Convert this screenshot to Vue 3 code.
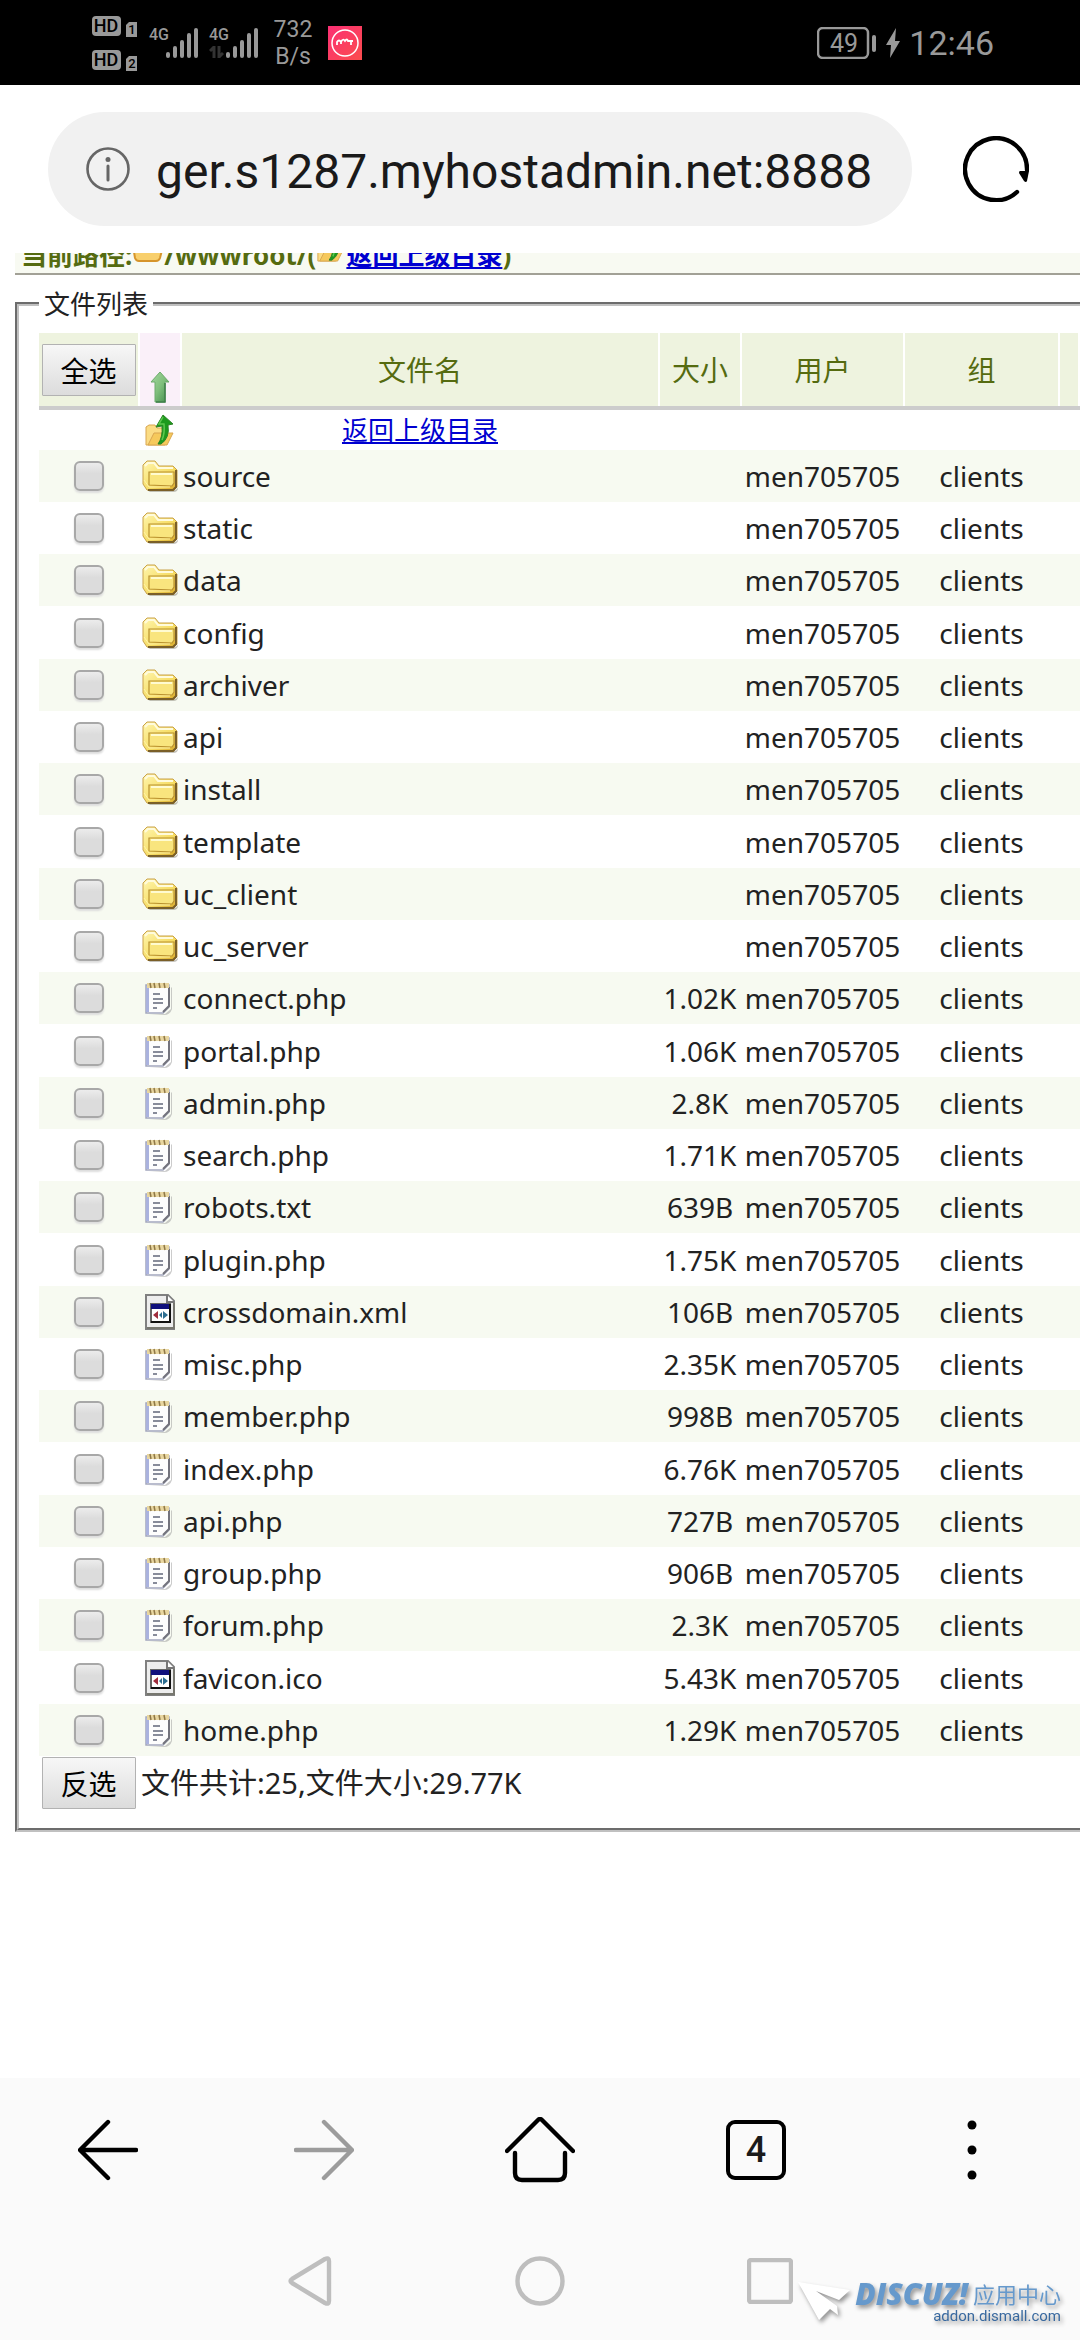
<script setup>
import {ref, computed} from 'vue';

const url = ref('ger.s1287.myhostadmin.net:8888');

const folders = ['source', 'static', 'data', 'config', 'archiver', 'api', 'install', 'template', 'uc_client', 'uc_server'];

const files = [
  ['connect.php', '1.02K'],
  ['portal.php', '1.06K'],
  ['admin.php', '2.8K'],
  ['search.php', '1.71K'],
  ['robots.txt', '639B'],
  ['plugin.php', '1.75K'],
  ['crossdomain.xml', '106B'],
  ['misc.php', '2.35K'],
  ['member.php', '998B'],
  ['index.php', '6.76K'],
  ['api.php', '727B'],
  ['group.php', '906B'],
  ['forum.php', '2.3K'],
  ['favicon.ico', '5.43K'],
  ['home.php', '1.29K']
];

const iconFor = (name) => {
  return /\.(xml|ico)$/.test(name) ? 'icon-app' : 'icon-note';
};

const rows = ref([
  ...folders.map((name) => ({name, size: '', icon: 'icon-folder', checked: false})),
  ...files.map(([name, size]) => ({name, size, icon: iconFor(name), checked: false}))
]);

const summary = computed(() => `文件共计:${rows.value.length},文件大小:29.77K`);

const selectAll = () => {
  rows.value.forEach((row) => { row.checked = true; });
};

const invert = () => {
  rows.value.forEach((row) => { row.checked = !row.checked; });
};
</script>

<template>
  <div class="phone">
    <!-- shared icons -->
    <svg class="defs" width="0" height="0" aria-hidden="true">
      <defs>
        <linearGradient id="gold" x1="0" y1="0" x2="1" y2="1">
          <stop offset="0" stop-color="#fff6b0" />
          <stop offset="0.6" stop-color="#f6dc62" />
          <stop offset="1" stop-color="#d9a928" />
        </linearGradient>
        <linearGradient id="green" x1="0" y1="0" x2="1" y2="1">
          <stop offset="0" stop-color="#a5d8a0" />
          <stop offset="0.5" stop-color="#7fbf7c" />
          <stop offset="1" stop-color="#3f8a4a" />
        </linearGradient>
        <linearGradient id="pink" x1="0" y1="0" x2="1" y2="1">
          <stop offset="0" stop-color="#fb2f74" />
          <stop offset="1" stop-color="#fb4d4d" />
        </linearGradient>
      </defs>
      <symbol id="icon-folder" viewBox="0 0 36 36">
        <path d="M5 32h27q4 0 4-4V13v17q0 4-5 4H8z" fill="#8a8577" opacity="0.5" />
        <path d="M1 26V7l4-4h8l4 5h14l4 4v17l-3 3H5z" fill="url(#gold)" stroke="#c9a24a" />
        <path d="M34 12v17l-3 3H6" fill="none" stroke="#7a5f28" stroke-width="2" />
        <path d="M3 8l3-3h6l4 5h15" fill="none" stroke="#fffbdc" stroke-width="2" />
        <path d="M7 27V14h25v11l-2 3z" fill="#f9e57e" stroke="#b8902f" stroke-width="1.2" />
        <path d="M9 16h21" stroke="#fffbd0" stroke-width="2" />
        <path d="M2 22l5 7h21" fill="none" stroke="#fff3a8" />
      </symbol>
      <symbol id="icon-bowl" viewBox="0 0 32 24">
        <path d="M1 8q0-6 6-6h18q6 0 6 6l-3 12q-1 3-4 3H7q-3 0-4-3z" fill="#f8cf6c" stroke="#d6952b" stroke-width="2" />
        <path d="M4 9h24l-2 5H6z" fill="#ffeeb0" />
      </symbol>
      <symbol id="icon-open" viewBox="0 0 30 32">
        <path d="M1 31V13l3-2h6l2 3h8v17z" fill="#fbdc84" stroke="#d9a650" />
        <path d="M3 31l6-12h19l-6 12z" fill="#f6c95c" stroke="#d9a650" />
        <path d="M13 30q5-7 4-18l-6 1 7-12 10 9-5 1q2 13-7 19z" fill="#1d9a1d" stroke="#2c8427" />
        <path d="M18 3l-4 7h5q1 9-2 16" fill="none" stroke="#5fc850" stroke-width="1.5" />
      </symbol>
      <symbol id="icon-note" viewBox="0 0 36 36">
        <path d="M7 35l16-1 6-5V7l1 1v21q-2 6-8 6z" fill="#999" opacity="0.5" />
        <path d="M4 5h23v22l-6 6H4z" fill="#fdfdfd" stroke="#a3a7bd" stroke-width="1.5" />
        <path d="M4 6h3v26H4z" fill="#aab2de" />
        <path d="M27 7v19l-6 6" fill="none" stroke="#73737c" stroke-width="2" />
        <path d="M5 3h22v5H5z" fill="#e8d6a0" />
        <path d="M8 3l1 5M12 3l1 5M17 3l1 5M22 3l1 5" stroke="#8f7847" stroke-width="1.5" />
        <path d="M11 14h7M11 19h10M11 23h10M11 28h4" stroke="#626779" stroke-width="1.6" />
      </symbol>
      <symbol id="icon-app" viewBox="0 0 36 36">
        <path d="M4 1h22l6 6v28H4z" fill="#ededed" stroke="#808080" stroke-width="2" />
        <path d="M25 1v7h7" fill="#fff" stroke="#777" stroke-width="2" />
        <path d="M32 9v25H5" fill="none" stroke="#77776f" stroke-width="2" />
        <path d="M9 10h19v18H9z" fill="#fff" stroke="#666" stroke-width="2" />
        <path d="M9 10h19v5H9z" fill="#10107c" />
        <path d="M28 10v18H9" fill="none" stroke="#111" stroke-width="2" />
        <path d="M16 17v8l-5-4z" fill="#a02c3c" />
        <path d="M17 21l3-3v6zM21 17l5 4-5 4z" fill="#2d6d90" />
      </symbol>
      <symbol id="icon-signal" viewBox="0 0 32 30">
        <path d="M2 26v2M9 20v8M16 14v14M23 7v21M30 2v26" stroke="#999" stroke-width="4" stroke-linecap="round" />
      </symbol>
    </svg>

    <header class="status">
      <svg width="46" height="58" viewBox="0 0 46 58" role="img" aria-label="HD">
        <rect x="0" y="2" width="29" height="20" rx="4" fill="#999" />
        <rect x="0" y="36" width="29" height="20" rx="4" fill="#999" />
        <path d="M34 11l3-3h8v15H34z" fill="#999" />
        <path d="M34 45l3-3h8v15H34z" fill="#999" />
        <g fill="#000" font-family="Roboto, sans-serif" font-weight="500" text-anchor="middle">
          <text x="14" y="18" font-size="18">HD</text>
          <text x="14" y="52" font-size="18">HD</text>
          <text x="40" y="20" font-size="13">1</text>
          <text x="40" y="54" font-size="13">2</text>
        </g>
      </svg>
      <div class="cell">
        <div class="gen"><span>4G</span></div>
        <svg width="32" height="30"><use href="#icon-signal" /></svg>
      </div>
      <div class="cell">
        <div class="gen">
          <span>4G</span>
          <svg width="15" height="12" viewBox="0 0 15 12">
            <path d="M1 5l4-4v11M10 0v11l4-4" fill="none" stroke="#333" stroke-width="3" />
          </svg>
        </div>
        <svg width="32" height="30"><use href="#icon-signal" /></svg>
      </div>
      <div class="speed"><span>732</span><span>B/s</span></div>
      <svg width="34" height="34" viewBox="0 0 34 34">
        <rect width="34" height="34" fill="url(#pink)" />
        <circle cx="17" cy="17" r="13" fill="none" stroke="#fff" stroke-width="1.5" />
        <path d="M9 19v-3q2-3 4 0 2-4 4-1 2-3 3 0h5M23 15v4M13 16v2" fill="none" stroke="#fff" stroke-width="1.8" />
      </svg>
      <div class="right">
        <svg width="60" height="32" viewBox="0 0 60 32" role="img" aria-label="49%">
          <rect x="1" y="1" width="50" height="30" rx="5" fill="none" stroke="#999" stroke-width="2.5" />
          <rect x="55" y="8" width="4" height="17" rx="2" fill="#999" />
          <text x="27" y="25" fill="#999" font-family="Roboto, sans-serif" font-size="25" text-anchor="middle">49</text>
        </svg>
        <svg width="14" height="30" viewBox="0 0 14 30">
          <path d="M10 0L0 17h5L4 30l10-17H9z" fill="#999" />
        </svg>
        <time>12:46</time>
      </div>
    </header>

    <div class="address">
      <label class="url">
        <svg width="44" height="44" viewBox="0 0 44 44" fill="none" stroke="#666" role="img" aria-label="网站信息">
          <circle cx="22" cy="22" r="20.5" stroke-width="2.6" />
          <path d="M22 19v14" stroke-width="3" stroke-linecap="round" />
          <circle cx="22" cy="12.5" r="2.5" fill="#666" stroke="none" />
        </svg>
        <input v-model="url" type="text" aria-label="网址">
      </label>
      <button class="plain" type="button" aria-label="刷新">
        <svg width="66" height="66" viewBox="0 0 66 66">
          <path d="M54 56A31 31 0 1 1 64 34" fill="none" stroke="#000" stroke-width="4.4" stroke-linecap="round" />
          <path d="M57 35h9l-2 10q-1 2-3 0l-5-8q0-2 1-2z" fill="#000" />
        </svg>
      </button>
    </div>

    <main class="page">
      <div class="path">
        <p>
          <span>当前路径:</span>
          <svg width="32" height="24"><use href="#icon-bowl" /></svg>
          <span>/wwwroot/(</span>
          <svg width="30" height="30"><use href="#icon-open" /></svg>
          <a href="#">返回上级目录</a>
          <span>)</span>
        </p>
      </div>

      <fieldset>
        <legend>文件列表</legend>
        <table>
          <colgroup>
            <col class="c-check">
            <col class="c-icon">
            <col>
            <col class="c-size">
            <col class="c-user">
            <col class="c-group">
            <col class="c-more">
          </colgroup>
          <thead>
            <tr>
              <th><button class="btn" type="button" @click="selectAll">全选</button></th>
              <th class="sorted">
                <svg width="20" height="32" viewBox="0 0 20 32">
                  <path d="M10 1l9 10h-4v20H5V11H1z" fill="url(#green)" stroke="#6cab6c" />
                  <path d="M15 12v19H6" fill="none" stroke="#3c7d48" stroke-width="1.5" />
                </svg>
              </th>
              <th>文件名</th>
              <th>大小</th>
              <th>用户</th>
              <th>组</th>
              <th></th>
            </tr>
          </thead>
          <tbody>
            <tr class="up">
              <td></td>
              <td><svg width="30" height="32"><use href="#icon-open" /></svg></td>
              <td><a href="#">返回上级目录</a></td>
              <td colspan="4"></td>
            </tr>
          </tbody>
          <tbody class="list">
            <tr v-for="row in rows" :key="row.name">
              <td><input v-model="row.checked" type="checkbox" :aria-label="row.name"></td>
              <td><svg width="36" height="36"><use :href="'#' + row.icon" /></svg></td>
              <td class="name">{{ row.name }}</td>
              <td>{{ row.size }}</td>
              <td>men705705</td>
              <td>clients</td>
              <td></td>
            </tr>
          </tbody>
          <tfoot>
            <tr>
              <td><button class="btn" type="button" @click="invert">反选</button></td>
              <td class="total" colspan="6">{{ summary }}</td>
            </tr>
          </tfoot>
        </table>
      </fieldset>
    </main>

    <footer class="bottom">
      <nav class="tools">
        <button class="plain" type="button" aria-label="后退">
          <svg width="60" height="64" viewBox="0 0 60 64" fill="none" stroke="#000" stroke-width="4.4" stroke-linecap="round" stroke-linejoin="round">
            <path d="M30 4L2 32l28 28M3 32h55" />
          </svg>
        </button>
        <button class="plain" type="button" aria-label="前进">
          <svg width="60" height="64" viewBox="0 0 60 64" fill="none" stroke="#9c9c9c" stroke-width="4.4" stroke-linecap="round" stroke-linejoin="round">
            <path d="M30 4l28 28-28 28M57 32H2" />
          </svg>
        </button>
        <button class="plain" type="button" aria-label="主页">
          <svg width="70" height="66" viewBox="0 0 70 66" fill="none" stroke="#000" stroke-width="4.4" stroke-linecap="round" stroke-linejoin="round">
            <path d="M2 34L33 3q2-2 4 0l31 31M10 36v20q0 7 7 7h36q7 0 7-7V36" />
          </svg>
        </button>
        <button class="tabs" type="button" aria-label="标签页">4</button>
        <button class="plain" type="button" aria-label="菜单">
          <svg width="10" height="60" viewBox="0 0 10 60">
            <circle cx="5" cy="5" r="4.5" />
            <circle cx="5" cy="30" r="4.5" />
            <circle cx="5" cy="55" r="4.5" />
          </svg>
        </button>
      </nav>
      <nav class="system">
        <button class="plain" type="button" aria-label="返回">
          <svg width="44" height="50" viewBox="0 0 44 50" fill="none" stroke="#bebebe" stroke-width="4.4" stroke-linejoin="round">
            <path d="M37 3L4 23q-3 2 0 4l33 20q4 2 4-2V5q0-4-4-2z" />
          </svg>
        </button>
        <button class="plain" type="button" aria-label="桌面">
          <svg width="50" height="50" viewBox="0 0 50 50">
            <circle cx="25" cy="25" r="22.5" fill="none" stroke="#bebebe" stroke-width="4.4" />
          </svg>
        </button>
        <button class="plain" type="button" aria-label="最近任务">
          <svg width="46" height="46" viewBox="0 0 46 46">
            <rect x="2" y="2" width="42" height="42" rx="2" fill="none" stroke="#bebebe" stroke-width="4.4" />
          </svg>
        </button>
      </nav>
      <div class="mark">
        <svg width="56" height="44" viewBox="0 0 56 44">
          <path d="M1 1l52 8-11 10-23-9 21 15 1 9-8-6-11 11z" fill="#fff" />
        </svg>
        <div class="mark-text">
          <p><b>DISCUZ!</b><span>应用中心</span></p>
          <small>addon.dismall.com</small>
        </div>
      </div>
    </footer>
  </div>
</template>

<style>
body {
  margin: 0;
  background: #fff;
}
</style>

<style scoped>
.phone {
  display: flex;
  flex-direction: column;
  min-height: 100vh;
  overflow: hidden;
  background: #fff;
  color: #222;
  font-family: "Noto Sans", "Noto Sans CJK SC", sans-serif;
  font-size: 28px;
}

svg {
  display: block;
  flex: none;
}

.defs {
  position: absolute;
}

p {
  margin: 0;
}

a {
  color: #0000d0;
}

/* status bar */
.status {
  display: flex;
  align-items: center;
  gap: 11px;
  height: 85px;
  padding: 0 86px 0 92px;
  background: #000;
  color: #999;
  font-family: Roboto, sans-serif;
}

.cell {
  display: flex;
}

.gen {
  display: flex;
  flex-direction: column;
  justify-content: space-between;
  width: 17px;
  height: 30px;
  font-size: 16px;
  font-weight: 500;
  line-height: 14px;
}

.speed {
  display: flex;
  flex-direction: column;
  width: 48px;
  font-size: 23px;
  line-height: 27px;
  text-align: center;
}

.right {
  display: flex;
  align-items: center;
  gap: 9px;
  margin-left: auto;
  font-size: 34px;
}

/* address bar */
.address {
  display: flex;
  align-items: center;
  gap: 51px;
  padding: 27px 51px 27px 48px;
}

.url {
  display: flex;
  flex: 1;
  align-items: center;
  gap: 26px;
  height: 114px;
  padding: 0 24px 0 38px;
  border-radius: 57px;
  background: #f1f1f1;
  box-sizing: border-box;
}

.url input {
  flex: 1;
  min-width: 0;
  padding: 4px 0 0;
  border: 0;
  outline: 0;
  background: none;
  color: #1a1a1a;
  font-family: Roboto, sans-serif;
  font-size: 48px;
}

.plain {
  display: flex;
  align-items: center;
  justify-content: center;
  padding: 0;
  border: 0;
  background: none;
}

/* web page */
.page {
  flex: 1;
  padding-left: 15px;
}

/* scrolled halfway under the address bar */
.path {
  display: flex;
  align-items: flex-end;
  height: 20px;
  overflow: hidden;
  border-bottom: 2px solid #a2a196;
  background: #f8faf2;
}

.path p {
  display: flex;
  align-items: center;
  height: 36px;
  padding-left: 6px;
  color: #556b10;
  font-size: 26px;
  font-weight: 700;
  line-height: 36px;
}

.path svg {
  align-self: flex-end;
  margin-bottom: 11px;
}

fieldset {
  min-width: 0;
  margin: 12px 0 0;
  padding: 12px 0 18px 20px;
  border: 4px groove #c0c0c0;
  border-right: 0;
}

legend {
  padding: 0 5px;
  font-size: 26px;
  line-height: 34px;
}

table {
  width: 100%;
  table-layout: fixed;
  border-spacing: 0;
}

.c-check {
  width: 101px;
}

.c-icon {
  width: 42px;
}

.c-size {
  width: 82px;
}

.c-user {
  width: 163px;
}

.c-group {
  width: 155px;
}

.c-more {
  width: 20px;
}

th,
td {
  padding: 0 2px 0 0;
  text-align: center;
  white-space: nowrap;
  line-height: 36px;
}

td svg,
th svg {
  margin: 0 auto;
}

th {
  height: 73px;
  border-bottom: 4px solid #ccc;
  background: #eef3df;
  box-shadow: inset -2px 0 #fff;
  color: #556b10;
  font-weight: 400;
}

.sorted {
  height: 70px;
  padding-bottom: 3px;
  background: #faf0f9;
  vertical-align: bottom;
}

.up td {
  height: 40px;
  font-size: 26px;
}

.list td {
  height: 52px;
}

.list tr:nth-child(4n) td {
  height: 53px;
}

.list tr:nth-child(odd) {
  background: #f7faf1;
}

.list .name,
.total {
  padding-left: 1px;
  text-align: left;
}

.total {
  font-size: 29px;
}

.list input {
  display: block;
  width: 30px;
  height: 30px;
  margin: 0 auto;
  appearance: none;
  border: 2px solid #a8a8a8;
  border-radius: 6px;
  background: linear-gradient(#ececec, #dcdcdc 40%);
  box-shadow: 0 2px 2px #ddd;
}

.list input:checked {
  background: #8fb5e8;
}

.btn {
  width: 94px;
  height: 52px;
  padding: 0;
  border: 1px solid #b2b2b2;
  border-radius: 1px;
  background: linear-gradient(#f7f7f7, #dcdcdc);
  color: #000;
  font-family: inherit;
  font-size: 28px;
  vertical-align: middle;
}

tfoot td {
  height: 54px;
}

/* bottom bars */
.bottom {
  position: relative;
  background: #fafafa;
}

.tools {
  display: grid;
  grid-template-columns: repeat(5, 1fr);
  align-items: center;
  justify-items: center;
  height: 144px;
}

.tabs {
  width: 60px;
  height: 60px;
  padding: 0;
  border: 4px solid #000;
  border-radius: 9px;
  background: none;
  color: #1a1a1a;
  font-family: Roboto, sans-serif;
  font-size: 36px;
  font-weight: 500;
}

.system {
  display: grid;
  grid-template-columns: repeat(3, 230px);
  align-items: center;
  justify-content: center;
  justify-items: center;
  height: 118px;
}

.mark {
  position: absolute;
  right: 19px;
  bottom: 15px;
  display: flex;
  align-items: flex-start;
  gap: 2px;
  filter: drop-shadow(2px 3px 2px rgba(0, 0, 0, 0.4));
}

.mark-text {
  display: flex;
  flex-direction: column;
  align-items: flex-end;
}

.mark p {
  display: flex;
  align-items: center;
  gap: 5px;
  color: #6699cc;
  font-size: 22px;
  line-height: 26px;
}

.mark b {
  font-family: "Open Sans", sans-serif;
  font-size: 30px;
  font-style: italic;
  font-weight: 800;
}

.mark small {
  color: #39699f;
  font-family: Roboto, sans-serif;
  font-size: 15px;
  line-height: 18px;
}
</style>
